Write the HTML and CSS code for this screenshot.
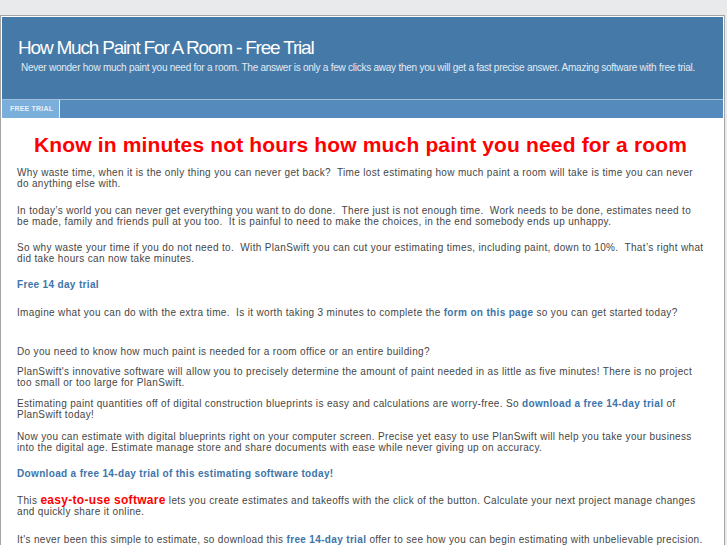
FILE: index.html
```html
<!DOCTYPE html>
<html>
<head>
<meta charset="utf-8">
<link rel="stylesheet" href="styles.css">
</head>
<body>
<div class="page">
  <div class="header">
    <div class="site-title">How Much Paint For A Room - Free Trial</div>
    <div class="site-desc">Never wonder how much paint you need for a room. The answer is only a few clicks away then you will get a fast precise answer. Amazing software with free trial.</div>
  </div>
  <div class="nav">
    <a class="nav-item">FREE TRIAL</a>
  </div>
  <div class="content">
    <h1 class="headline">Know in minutes not hours how much paint you need for a room</h1>
    <p class="m16">Why waste time, when it is the only thing you can never get back?&nbsp; Time lost estimating how much paint a room will take is time you can never do anything else with.</p>
    <p class="m15">In today’s world you can never get everything you want to do done.&nbsp; There just is not enough time.&nbsp; Work needs to be done, estimates need to be made, family and friends pull at you too.&nbsp; It is painful to need to make the choices, in the end somebody ends up unhappy.</p>
    <p class="m15">So why waste your time if you do not need to.&nbsp; With PlanSwift you can cut your estimating times, including paint, down to 10%.&nbsp; That’s right what did take hours can now take minutes.</p>
    <p class="m17"><a class="link strong">Free 14 day trial</a></p>
    <p class="m28">Imagine what you can do with the extra time.&nbsp; Is it worth taking 3 minutes to complete the <a class="link strong">form on this page</a> so you can get started today?</p>
    <p class="m9">Do you need to know how much paint is needed for a room office or an entire building?</p>
    <p class="m10">PlanSwift's innovative software will allow you to precisely determine the amount of paint needed in as little as five minutes! There is no project too small or too large for PlanSwift.</p>
    <p class="m11">Estimating paint quantities off of digital construction blueprints is easy and calculations are worry-free. So <a class="link strong">download a free 14-day trial</a> of PlanSwift today!</p>
    <p class="m15">Now you can estimate with digital blueprints right on your computer screen. Precise yet easy to use PlanSwift will help you take your business into the digital age. Estimate manage store and share documents with ease while never giving up on accuracy.</p>
    <p class="m16"><a class="link strong">Download a free 14-day trial of this estimating software today!</a></p>
    <p class="m17">This <span class="hot">easy-to-use software</span> lets you create estimates and takeoffs with the click of the button. Calculate your next project manage changes and quickly share it online.</p>
    <p class="m16">It's never been this simple to estimate, so download this <a class="link strong">free 14-day trial</a> offer to see how you can begin estimating with unbelievable precision.</p>
  </div>
</div>
</body>
</html>
```

FILE: styles.css
```css
html, body {
  margin: 0;
  padding: 0;
}
body {
  background: #e9eaec;
  font-family: "Liberation Sans", Arial, sans-serif;
}
.page {
  margin-top: 15px;
  width: 721px;
  border: 1px solid #a4a4a4;
  border-bottom: none;
  padding: 1px;
  background: #fff;
  min-height: 600px;
}
.header {
  background: #4479a8;
  height: 62px;
  padding: 20px 0 0 16px;
  border-bottom: 1px solid #a3bfd9;
}
.site-title {
  color: #fff;
  font-size: 19px;
  letter-spacing: -1.2px;
  line-height: 22px;
}
.site-desc {
  color: #e3ebf3;
  font-size: 10px;
  letter-spacing: -0.25px;
  line-height: 12px;
  margin-top: 3px;
  padding-left: 3px;
}
.nav {
  background: #548abc;
  height: 18px;
  display: flex;
}
.nav-item {
  background: #7aaedb;
  color: #e8f0f8;
  font-size: 7px;
  font-weight: bold;
  letter-spacing: 0.2px;
  white-space: nowrap;
  width: 58px;
  box-sizing: border-box;
  padding-left: 8px;
  line-height: 18px;
  border-right: 1px solid #e6eef6;
}
.content {
  padding: 0 19px 0 15px;
  color: #464646;
  font-size: 10px;
  letter-spacing: 0.34px;
  line-height: 11px;
}
.headline {
  color: #ff0000;
  font-size: 21px;
  letter-spacing: 0.15px;
  font-weight: bold;
  text-align: center;
  margin: 16px 0 11px;
  line-height: 22px;
}
.content p { margin: 0; }
.content p.m9 { margin-bottom: 9px; }
.content p.m10 { margin-bottom: 10px; }
.content p.m11 { margin-bottom: 11px; }
.content p.m15 { margin-bottom: 15px; }
.content p.m16 { margin-bottom: 16px; }
.content p.m17 { margin-bottom: 17px; }
.content p.m28 { margin-bottom: 28px; }
.link {
  color: #3d74aa;
}
.strong {
  font-weight: bold;
}
.hot {
  color: #ff0000;
  font-weight: bold;
  font-size: 12px;
  letter-spacing: 0.3px;
  line-height: 10px;
}
```
